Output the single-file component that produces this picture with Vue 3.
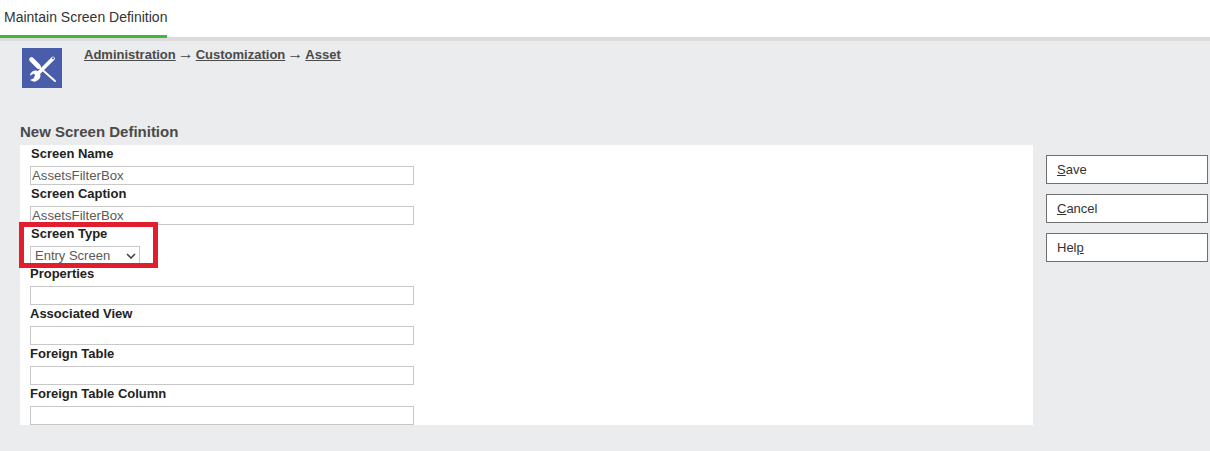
<script setup>
const fields = [
  { label: 'Screen Name', value: 'AssetsFilterBox', shift: true },
  { label: 'Screen Caption', value: 'AssetsFilterBox', shift: true },
  { label: 'Screen Type', select: true, shift: true },
  { label: 'Properties', value: '' },
  { label: 'Associated View', value: '' },
  { label: 'Foreign Table', value: '' },
  { label: 'Foreign Table Column', value: '' },
]
</script>

<template>
  <div class="page">
    <header class="tabbar">
      <div class="tab">Maintain Screen Definition</div>
    </header>
    <div class="crumbrow">
      <div class="logo">
        <svg width="40" height="40" viewBox="0 0 40 40">
          <path d="M9.5 11.5 L16.5 18.5" stroke="#fff" stroke-width="4.6" stroke-linecap="round" fill="none" />
          <path d="M16 18 L33 33" stroke="#fff" stroke-width="1.9" stroke-linecap="round" fill="none" />
          <path d="M31 10.5 L16 25.5" stroke="#fff" stroke-width="3.8" stroke-linecap="round" fill="none" />
          <circle cx="31" cy="10.3" r="1" fill="#4a5dab" />
          <path d="M17.5 24.5 A6 6 0 0 1 9 32.5 L8 32 L11.5 30.5 L13 27.5 L12 25.5 L7.8 27.8 A6 6 0 0 1 14.5 22.5 Z" fill="#fff" />
        </svg>
      </div>
      <nav class="crumbs">
        <a>Administration</a><span class="arrow">→</span><a>Customization</a><span class="arrow">→</span><a>Asset</a>
      </nav>
    </div>
    <h2 class="title">New Screen Definition</h2>
    <div class="body">
      <form class="card">
        <div v-for="f in fields" :key="f.label" class="field">
          <label :class="{ shift: f.shift }">{{ f.label }}</label>
          <div v-if="f.select" class="select">
            <span>Entry Screen</span>
            <svg width="10" height="6" viewBox="0 0 10 6"><path d="M1 1 L5 5 L9 1" fill="none" stroke="#444" stroke-width="1.6" /></svg>
          </div>
          <div v-else class="input">{{ f.value }}</div>
        </div>
      </form>
      <div class="highlight"></div>
      <aside class="actions">
        <button type="button"><u>S</u>ave</button>
        <button type="button"><u>C</u>ancel</button>
        <button type="button">Hel<u>p</u></button>
      </aside>
    </div>
  </div>
</template>

<style>
html, body { margin: 0; background: #ebecee; }
</style>

<style scoped>
.page {
  height: 451px;
  overflow: hidden;
  background: #ebecee;
  font-family: "Liberation Sans", Arial, sans-serif;
  color: #222;
}
.tabbar {
  height: 37px;
  background: #fff;
  border-bottom: 4px solid #dcdcdc;
}
.tab {
  width: 167px;
  padding-left: 4px;
  box-sizing: border-box;
  height: 38px;
  border-bottom: 3px solid #41b83a;
  line-height: 35px;
  font-size: 14px;
  color: #333;
  white-space: nowrap;
}
.crumbrow {
  display: flex;
  padding: 7px 0 0 22px;
  height: 78px;
  box-sizing: border-box;
}
.logo {
  width: 40px;
  height: 40px;
  background: #4a5dab;
}
.crumbs {
  margin-left: 22px;
  margin-top: -2px;
  font-size: 13px;
  line-height: 15px;
  color: #444;
  display: flex;
  align-items: baseline;
}
.crumbs a {
  font-weight: 700;
  text-decoration: underline;
  color: #4a4a4a;
}
.arrow {
  width: 20px;
  text-align: center;
  font-size: 16px;
  line-height: 15px;
}
.title {
  margin: 0 0 0 20px;
  font-size: 15px;
  line-height: 17px;
  font-weight: 700;
  color: #4a4a4a;
  padding-top: 4px;
  height: 26px;
  box-sizing: border-box;
}
.body {
  position: relative;
  display: flex;
  margin-left: 20px;
}
.card {
  width: 1013px;
  height: 280px;
  background: #fff;
  overflow: hidden;
  padding-top: 1px;
  box-sizing: border-box;
}
.field {
  height: 40px;
  padding-left: 10px;
}
.field label {
  display: block;
  height: 20px;
  line-height: 15px;
  font-size: 13px;
  font-weight: 700;
  color: #222;
}
.field label.shift { padding-left: 1px; }
.input {
  width: 384px;
  height: 19px;
  border: 1px solid #c8c8c8;
  box-sizing: border-box;
  font-size: 13.2px;
  line-height: 17px;
  padding-left: 1px;
  color: #5a5a5a;
  white-space: nowrap;
}
.select {
  width: 110px;
  height: 19px;
  border: 1px solid #c8c8c8;
  box-sizing: border-box;
  display: flex;
  align-items: center;
  justify-content: space-between;
  padding: 0 3px 0 4px;
  font-size: 13px;
  color: #5a5a5a;
}
.highlight {
  position: absolute;
  left: -1px;
  top: 77px;
  width: 139px;
  height: 46px;
  border: 5px solid #e21d2e;
  box-sizing: border-box;
  pointer-events: none;
}
.actions {
  display: flex;
  flex-direction: column;
  gap: 10px;
  margin: 10px 0 0 13px;
}
.actions button {
  width: 162px;
  height: 29px;
  border: 1px solid #6f6f6f;
  background: #fff;
  text-align: left;
  padding: 0 0 0 10px;
  font-family: inherit;
  font-size: 13px;
  color: #333;
}
</style>
